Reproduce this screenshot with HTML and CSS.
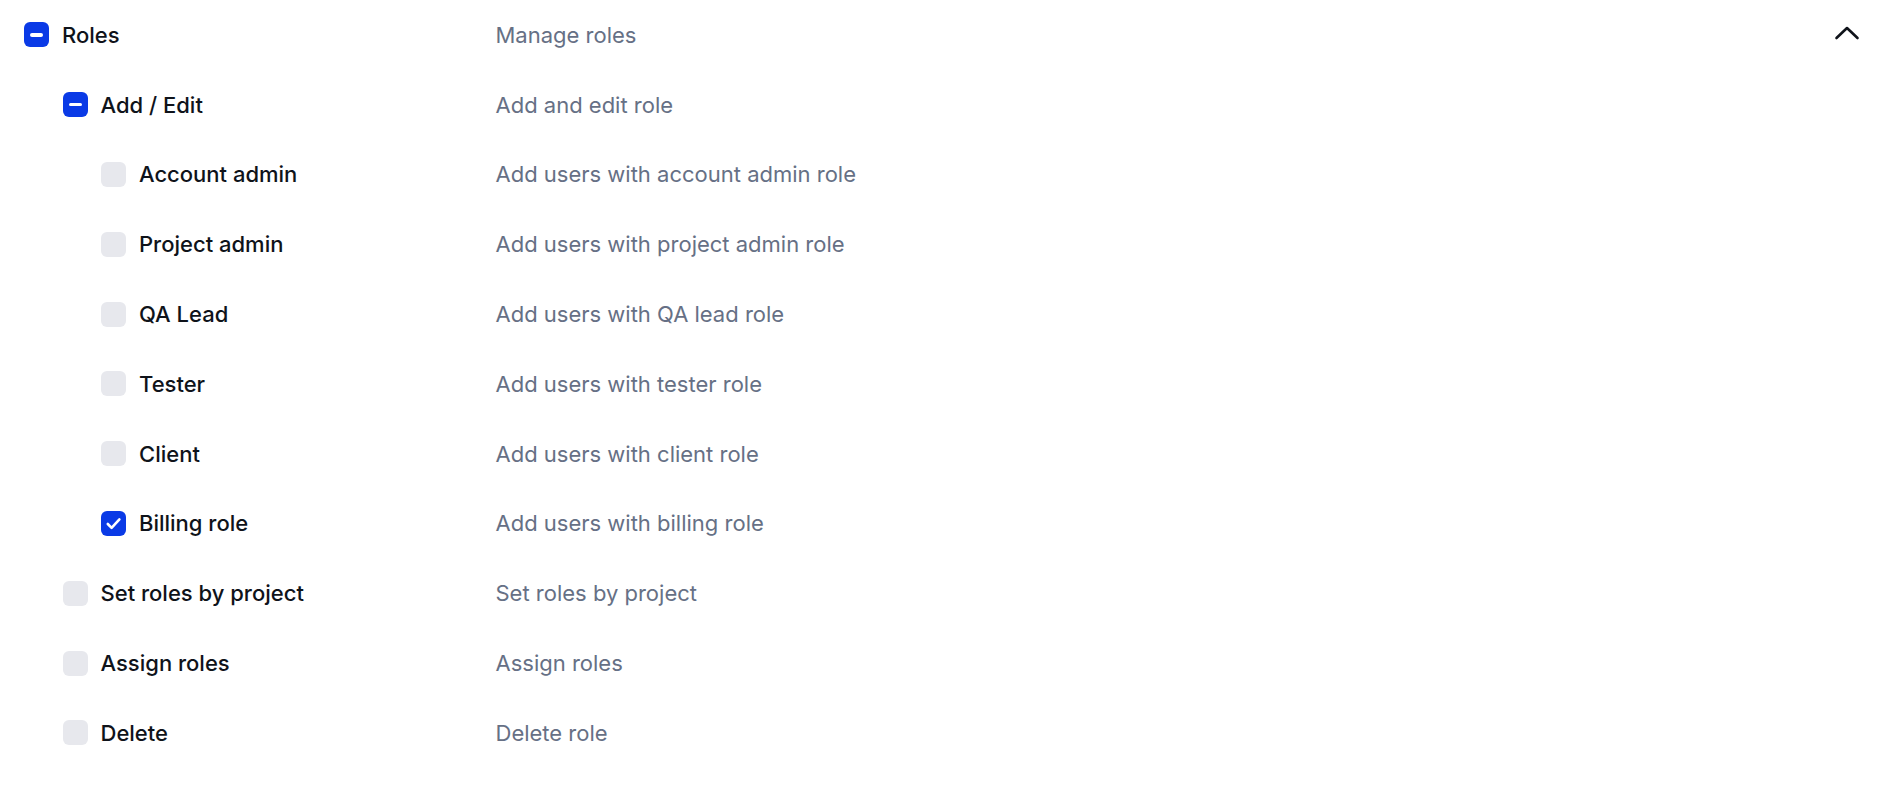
FILE: index.html
```html
<!DOCTYPE html>
<html lang="en">
<head>
<meta charset="utf-8">
<title>Roles permissions</title>
<link rel="stylesheet" href="styles.css">
</head>
<body>
<div class="perm-list">
  <div class="perm-row level-0">
    <div class="perm-label"><span class="cb cb-partial"><span class="dash"></span></span><span class="name">Roles</span></div>
    <div class="perm-desc">Manage roles</div>
    <button class="toggle" aria-label="Collapse">
      <svg width="26" height="14" viewBox="0 0 26 14"><polyline points="2.5,12 13,2 23.5,12" fill="none" stroke="#0f131a" stroke-width="2.6" stroke-linecap="round" stroke-linejoin="round"/></svg>
    </button>
  </div>
  <div class="perm-row level-1">
    <div class="perm-label"><span class="cb cb-partial"><span class="dash"></span></span><span class="name">Add / Edit</span></div>
    <div class="perm-desc">Add and edit role</div>
  </div>
  <div class="perm-row level-2">
    <div class="perm-label"><span class="cb"></span><span class="name">Account admin</span></div>
    <div class="perm-desc">Add users with account admin role</div>
  </div>
  <div class="perm-row level-2">
    <div class="perm-label"><span class="cb"></span><span class="name">Project admin</span></div>
    <div class="perm-desc">Add users with project admin role</div>
  </div>
  <div class="perm-row level-2">
    <div class="perm-label"><span class="cb"></span><span class="name">QA Lead</span></div>
    <div class="perm-desc">Add users with QA lead role</div>
  </div>
  <div class="perm-row level-2">
    <div class="perm-label"><span class="cb"></span><span class="name">Tester</span></div>
    <div class="perm-desc">Add users with tester role</div>
  </div>
  <div class="perm-row level-2">
    <div class="perm-label"><span class="cb"></span><span class="name">Client</span></div>
    <div class="perm-desc">Add users with client role</div>
  </div>
  <div class="perm-row level-2">
    <div class="perm-label"><span class="cb cb-checked"><svg width="25" height="25" viewBox="0 0 25 25"><polyline points="6.8,13 10.6,16.8 18.4,8.4" fill="none" stroke="#fff" stroke-width="2.6" stroke-linecap="round" stroke-linejoin="round"/></svg></span><span class="name">Billing role</span></div>
    <div class="perm-desc">Add users with billing role</div>
  </div>
  <div class="perm-row level-1">
    <div class="perm-label"><span class="cb"></span><span class="name">Set roles by project</span></div>
    <div class="perm-desc">Set roles by project</div>
  </div>
  <div class="perm-row level-1">
    <div class="perm-label"><span class="cb"></span><span class="name">Assign roles</span></div>
    <div class="perm-desc">Assign roles</div>
  </div>
  <div class="perm-row level-1">
    <div class="perm-label"><span class="cb"></span><span class="name">Delete</span></div>
    <div class="perm-desc">Delete role</div>
  </div>
</div>
</body>
</html>
```
FILE: styles.css
```css
html, body {
  margin: 0;
  padding: 0;
  background: #ffffff;
}
body {
  font-family: Inter, "Noto Sans", "Liberation Sans", sans-serif;
  font-size: 22px;
  color: #0f131a;
}
.perm-list {
  display: flex;
  flex-direction: column;
}
.perm-row {
  display: grid;
  grid-template-columns: 471.5px 1fr auto;
  align-items: center;
  height: 69.8px;
  padding-left: 24px;
  padding-right: 40px;
}
.perm-label {
  display: flex;
  align-items: center;
  gap: 13px;
}
.level-1 .perm-label { padding-left: 38.5px; }
.level-2 .perm-label { padding-left: 77px; }
.cb {
  flex: none;
  width: 25px;
  height: 25px;
  border-radius: 6px;
  background: #e7e8ed;
  display: flex;
  align-items: center;
  justify-content: center;
}
.cb-partial, .cb-checked {
  background: #0a3ae6;
}
.dash {
  width: 13px;
  height: 3.5px;
  border-radius: 2px;
  background: #ffffff;
}
.name {
  line-height: 28px;
  font-weight: 500;
}
.perm-desc {
  color: #667085;
  line-height: 28px;
}
.toggle {
  border: none;
  background: none;
  padding: 0;
  width: 26px;
  height: 14px;
  display: flex;
  margin-top: -4px;
}
```
